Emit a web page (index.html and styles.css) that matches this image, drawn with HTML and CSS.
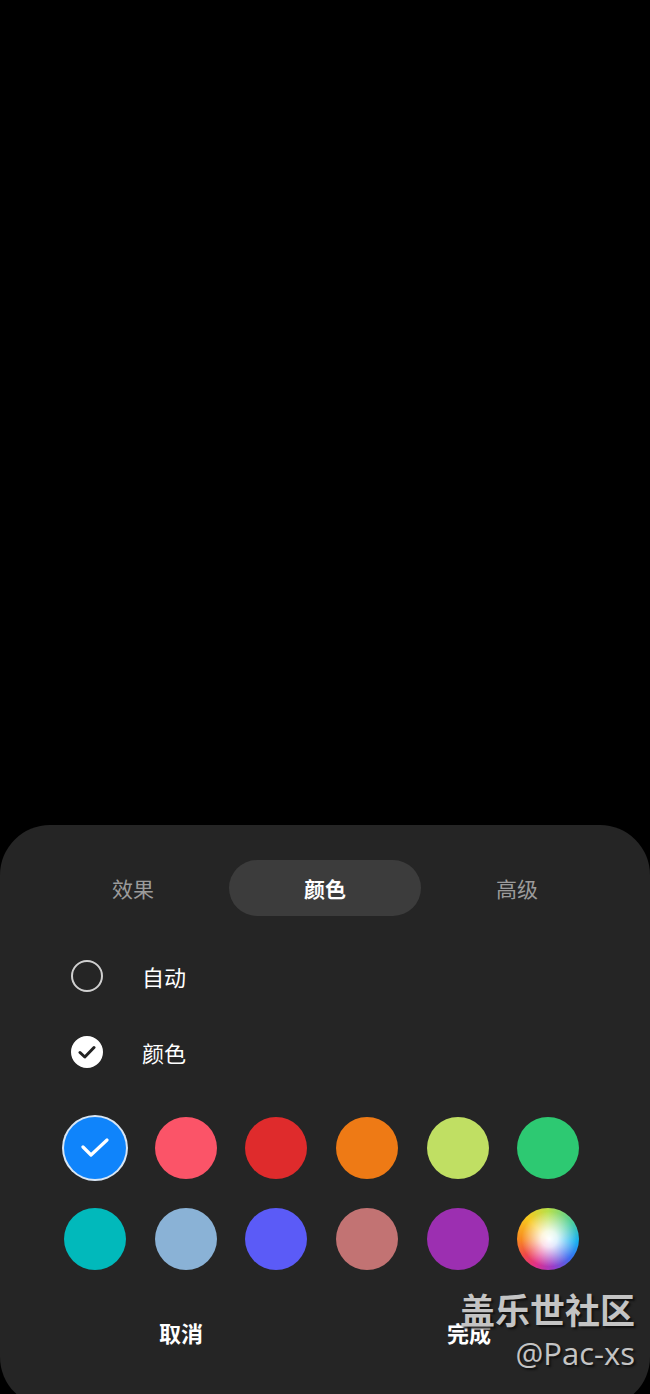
FILE: index.html
```html
<!DOCTYPE html>
<html lang="zh">
<head>
<meta charset="utf-8">
<link rel="stylesheet" href="styles.css">
</head>
<body>
<div class="screen">
  <div class="backdrop"></div>
  <div class="sheet">
    <div class="tabs">
      <div class="tab">效果</div>
      <div class="tab active">颜色</div>
      <div class="tab">高级</div>
    </div>
    <div class="options">
      <div class="option">
        <span class="radio"></span>
        <span class="option-label">自动</span>
      </div>
      <div class="option">
        <span class="radio checked">
          <svg width="18" height="14" viewBox="0 0 18 14"><path d="M2 7.5 L6.8 12 L16 2.5" fill="none" stroke="#222" stroke-width="3" stroke-linecap="round" stroke-linejoin="round"/></svg>
        </span>
        <span class="option-label">颜色</span>
      </div>
    </div>
    <div class="swatches">
      <div class="swatch selected c-blue">
        <svg width="28" height="20" viewBox="0 0 28 20"><path d="M2 9 L10 17 L26 2" fill="none" stroke="#fff" stroke-width="3.2" stroke-linecap="round" stroke-linejoin="round"/></svg>
      </div>
      <div class="swatch c-pink"></div>
      <div class="swatch c-red"></div>
      <div class="swatch c-orange"></div>
      <div class="swatch c-lime"></div>
      <div class="swatch c-green"></div>
      <div class="swatch c-teal"></div>
      <div class="swatch c-sky"></div>
      <div class="swatch c-violet"></div>
      <div class="swatch c-rose"></div>
      <div class="swatch c-purple"></div>
      <div class="swatch c-wheel"></div>
    </div>
    <div class="actions">
      <div class="action">取消</div>
      <div class="action">完成</div>
    </div>
    <div class="watermark">
      <div class="wm-title">盖乐世社区</div>
      <div class="wm-user">@Pac-xs</div>
    </div>
  </div>
</div>
</body>
</html>
```

FILE: styles.css
```css
* { box-sizing: border-box; }
html, body {
  margin: 0;
  padding: 0;
  background: #000;
  width: 650px;
  height: 1394px;
  overflow: hidden;
  font-family: "Noto Sans CJK SC", "Noto Sans", sans-serif;
}
.screen {
  width: 650px;
  height: 1394px;
  overflow: hidden;
}
.backdrop {
  height: 825px;
  background: #000;
}
.sheet {
  position: relative;
  height: 582px;
  background: #252525;
  border-radius: 50px;
}
.tabs {
  display: grid;
  grid-template-columns: repeat(3, 1fr);
  padding: 35px 37px 0;
}
.tab {
  height: 56px;
  display: flex;
  align-items: center;
  justify-content: center;
  font-size: 21px;
  color: #9b9b9b;
  border-radius: 28px;
}
.tab.active {
  background: #3c3c3c;
  color: #fff;
  font-weight: 700;
}
.options {
  padding: 22px 0 0 71px;
}
.option {
  height: 76px;
  display: flex;
  align-items: center;
}
.radio {
  width: 32px;
  height: 32px;
  border-radius: 50%;
  border: 2px solid #d0d0d0;
  display: flex;
  align-items: center;
  justify-content: center;
}
.radio.checked {
  background: #fff;
  border-color: #fff;
}
.option-label {
  margin-left: 39px;
  font-size: 22px;
  color: #fff;
}
.swatches {
  display: grid;
  grid-template-columns: repeat(6, 62px);
  column-gap: 28.7px;
  row-gap: 29px;
  padding: 27px 0 0 64px;
}
.swatch {
  width: 62px;
  height: 62px;
  border-radius: 50%;
  display: flex;
  align-items: center;
  justify-content: center;
}
.swatch.selected {
  box-shadow: 0 0 0 2px #d8e6f5;
}
.c-blue { background: #0f84fb; }
.c-pink { background: #fb5468; }
.c-red { background: #df2b2c; }
.c-orange { background: #ee7a15; }
.c-lime { background: #c0df63; }
.c-green { background: #2dc972; }
.c-teal { background: #01b9bb; }
.c-sky { background: #8ab2d6; }
.c-violet { background: #5b5bf7; }
.c-rose { background: #c27373; }
.c-purple { background: #9c2fb1; }
.c-wheel {
  background:
    radial-gradient(circle at 52% 50%, #fff 0%, rgba(255,255,255,0.85) 18%, rgba(255,255,255,0) 62%),
    conic-gradient(from 0deg, #b8e04a, #4fd0a0 55deg, #18b0f0 95deg, #3a6ef0 130deg, #9a3cc8 170deg, #e0308a 205deg, #f04848 235deg, #f88a20 270deg, #f8c820 315deg, #b8e04a);
}
.actions {
  display: grid;
  grid-template-columns: 1fr 1fr;
  padding: 45px 37px 0;
}
.action {
  text-align: center;
  font-size: 22px;
  font-weight: 700;
  color: #fff;
  line-height: 34px;
}
.watermark {
  position: absolute;
  right: 15px;
  top: 466px;
  text-align: right;
  color: #c4c4c4;
  text-shadow: 2px 2px 2px #111;
  line-height: 1;
}
.wm-title {
  font-size: 35px;
  font-weight: 700;
  letter-spacing: 0;
}
.wm-user {
  margin-top: 12px;
  font-family: "Open Sans", "DejaVu Sans", sans-serif;
  font-size: 31px;
}
```
